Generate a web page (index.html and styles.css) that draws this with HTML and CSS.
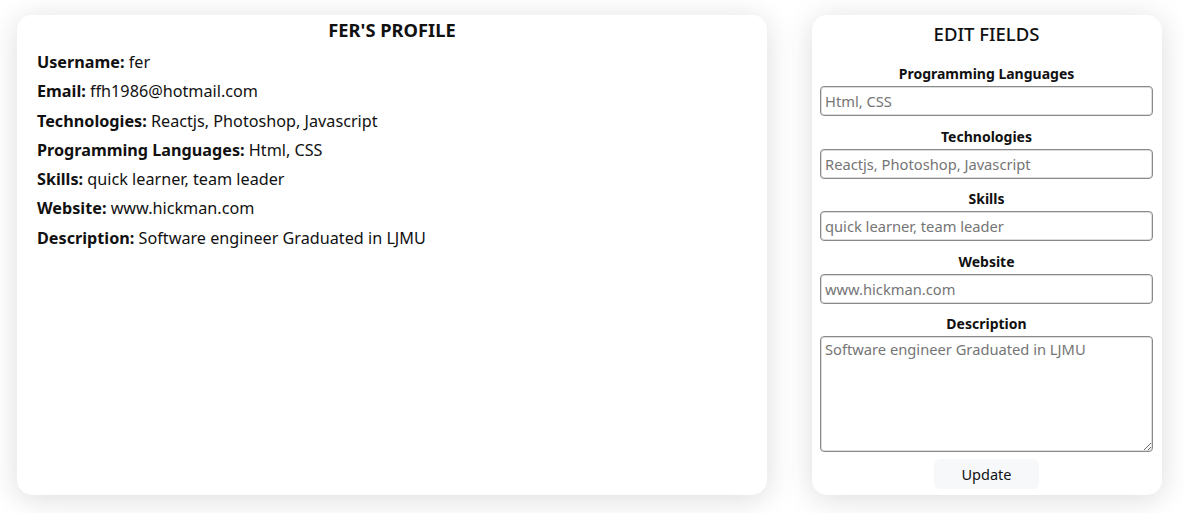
FILE: index.html
```html
<!DOCTYPE html>
<html>
<head>
<meta charset="utf-8">
<link rel="stylesheet" href="styles.css">
</head>
<body>
<div class="page">
  <section class="card profile">
    <h2 class="profile-title">FER'S PROFILE</h2>
    <p class="row"><b>Username:</b> fer</p>
    <p class="row"><b>Email:</b> ffh1986@hotmail.com</p>
    <p class="row"><b>Technologies:</b> Reactjs, Photoshop, Javascript</p>
    <p class="row"><b>Programming Languages:</b> Html, CSS</p>
    <p class="row"><b>Skills:</b> quick learner, team leader</p>
    <p class="row"><b>Website:</b> www.hickman.com</p>
    <p class="row"><b>Description:</b> Software engineer Graduated in LJMU</p>
  </section>
  <section class="card edit">
    <h2 class="edit-title">EDIT FIELDS</h2>
    <form class="form">
      <label class="field-label">Programming Languages</label>
      <input class="field" type="text" placeholder="Html, CSS">
      <label class="field-label">Technologies</label>
      <input class="field" type="text" placeholder="Reactjs, Photoshop, Javascript">
      <label class="field-label">Skills</label>
      <input class="field" type="text" placeholder="quick learner, team leader">
      <label class="field-label">Website</label>
      <input class="field" type="text" placeholder="www.hickman.com">
      <label class="field-label">Description</label>
      <textarea class="field area" placeholder="Software engineer Graduated in LJMU"></textarea>
      <button class="update" type="button">Update</button>
    </form>
  </section>
</div>
</body>
</html>
```

FILE: styles.css
```css
* { box-sizing: border-box; }
html, body { margin: 0; padding: 0; background: #ffffff; }
body {
  font-family: "Noto Sans", "Open Sans", sans-serif;
  color: #111;
  width: 1184px;
  height: 513px;
  overflow: hidden;
}
.page {
  display: flex;
  gap: 45px;
  padding: 15px 22px 18px 17px;
  height: 513px;
}
.card {
  background: #fff;
  border-radius: 15px;
  box-shadow: 0 4px 30px rgba(0, 0, 0, 0.14);
  height: 480px;
}
.profile {
  width: 750px;
  padding: 4px 20px;
}
.profile-title {
  margin: 0 0 12px;
  text-align: center;
  font-size: 18.3px;
  font-weight: 700;
  line-height: 22px;
}
.row {
  margin: 0 0 10px;
  font-size: 16.2px;
  line-height: 19.3px;
}
.row b { font-weight: 700; }
.edit {
  width: 350px;
  padding: 7px 9px 0 8px;
}
.edit-title {
  margin: 0;
  text-align: center;
  font-size: 18.5px;
  font-weight: 500;
  line-height: 24px;
}
.form {
  display: flex;
  flex-direction: column;
  margin-top: 18px;
}
.field-label {
  text-align: center;
  font-size: 14px;
  font-weight: 700;
  line-height: 20px;
  margin-top: 10.5px;
}
.field-label:first-child { margin-top: 0; }
.field {
  margin-top: 2px;
  width: 333px;
  height: 30px;
  border: 1px solid #8a8a8a;
  border-radius: 4px;
  box-shadow: inset 0 0 0 1px #dcdcdc;
  font-family: inherit;
  font-size: 14.7px;
  padding: 2px 4px;
  color: #333;
}
.field::placeholder { color: #757575; }
.area {
  height: 116px;
  resize: vertical;
}
.update {
  align-self: center;
  margin-top: 7px;
  width: 105px;
  height: 30px;
  border: none;
  border-radius: 6px;
  background: #f6f8fa;
  font-family: inherit;
  font-size: 14.5px;
  color: #111;
}
```
